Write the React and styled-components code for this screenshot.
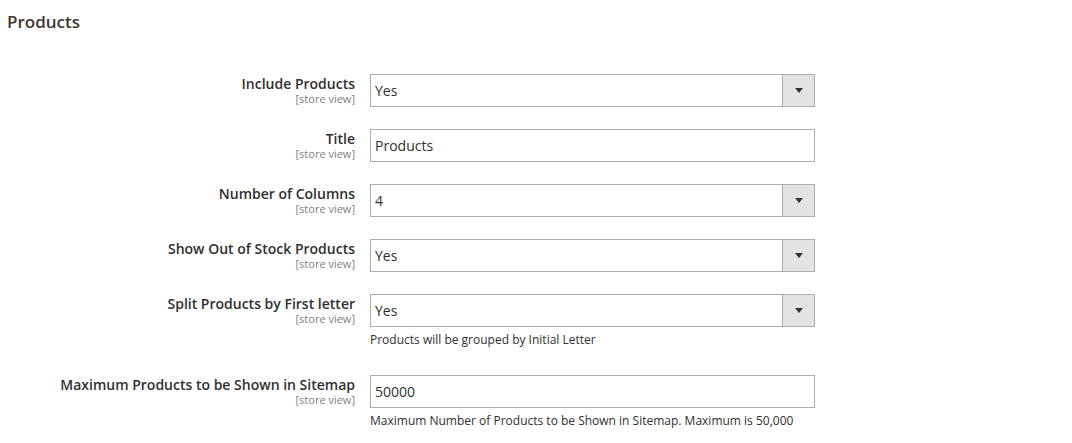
import React from "react";
import styled, { createGlobalStyle } from "styled-components";

const Global = createGlobalStyle`
  html, body { margin: 0; padding: 0; background: #fff; }
  body { font-family: "Open Sans", "Noto Sans", sans-serif; color: #303030; }
  * { box-sizing: border-box; }
`;

const Page = styled.div`
  width: 1072px;
  min-height: 443px;
  padding: 10px 0 0 7px;
`;

const SectionTitle = styled.h2`
  margin: 0 0 40px;
  font-size: 17px;
  line-height: 24px;
  font-weight: 600;
  color: #41362f;
`;

const Fields = styled.div`
  display: flex;
  flex-direction: column;
  gap: 22px;
`;

const Row = styled.div`
  display: grid;
  grid-template-columns: 348px 445px;
  column-gap: 15px;
  align-items: start;
`;

const LabelCol = styled.div`
  display: flex;
  flex-direction: column;
  align-items: flex-end;
  text-align: right;
  padding-top: 0;
`;

const Label = styled.label`
  font-size: 14px;
  line-height: 19px;
  font-weight: 600;
  color: #303030;
`;

const Scope = styled.span`
  margin-top: -1px;
  font-size: 11px;
  line-height: 13px;
  color: #808080;
`;

const Control = styled.div`
  display: flex;
  flex-direction: column;
`;

const TextInput = styled.input`
  width: 445px;
  height: 33px;
  margin: 0;
  padding: 0 4px;
  border: 1px solid #adadad;
  border-radius: 0;
  background: #fff;
  font-family: "Open Sans", "Noto Sans", sans-serif;
  font-size: 14px;
  color: #303030;
  outline: none;
`;

const SelectWrap = styled.div`
  position: relative;
  width: 445px;
  height: 33px;
`;

const Select = styled.select`
  appearance: none;
  -webkit-appearance: none;
  width: 100%;
  height: 33px;
  margin: 0;
  padding: 0 36px 0 4px;
  border: 1px solid #adadad;
  border-radius: 0;
  background: #fff;
  font-family: "Open Sans", "Noto Sans", sans-serif;
  font-size: 14px;
  color: #303030;
  outline: none;
`;

const ArrowBox = styled.span`
  position: absolute;
  top: 1px;
  right: 1px;
  bottom: 1px;
  width: 32px;
  background: #e3e3e3;
  border-left: 1px solid #adadad;
  display: flex;
  align-items: center;
  justify-content: center;
  pointer-events: none;

  &::after {
    content: "";
    width: 0;
    height: 0;
    border-left: 4px solid transparent;
    border-right: 4px solid transparent;
    border-top: 5px solid #333;
  }
`;

const Note = styled.div`
  margin-top: 3px;
  padding-bottom: 4px;
  font-size: 12px;
  line-height: 19px;
  color: #303030;
`;

const fields = [
  { label: "Include Products", type: "select", value: "Yes", options: ["Yes", "No"] },
  { label: "Title", type: "text", value: "Products" },
  { label: "Number of Columns", type: "select", value: "4", options: ["1", "2", "3", "4"] },
  { label: "Show Out of Stock Products", type: "select", value: "Yes", options: ["Yes", "No"] },
  {
    label: "Split Products by First letter",
    type: "select",
    value: "Yes",
    options: ["Yes", "No"],
    note: "Products will be grouped by Initial Letter",
  },
  {
    label: "Maximum Products to be Shown in Sitemap",
    type: "text",
    value: "50000",
    note: "Maximum Number of Products to be Shown in Sitemap. Maximum is 50,000",
  },
];

export default function App() {
  return (
    <Page>
      <Global />
      <SectionTitle>Products</SectionTitle>
      <Fields>
        {fields.map((f) => (
          <Row key={f.label}>
            <LabelCol>
              <Label>{f.label}</Label>
              <Scope>[store view]</Scope>
            </LabelCol>
            <Control>
              {f.type === "select" ? (
                <SelectWrap>
                  <Select defaultValue={f.value}>
                    {f.options.map((o) => (
                      <option key={o} value={o}>{o}</option>
                    ))}
                  </Select>
                  <ArrowBox />
                </SelectWrap>
              ) : (
                <TextInput defaultValue={f.value} />
              )}
              {f.note && <Note>{f.note}</Note>}
            </Control>
          </Row>
        ))}
      </Fields>
    </Page>
  );
}
